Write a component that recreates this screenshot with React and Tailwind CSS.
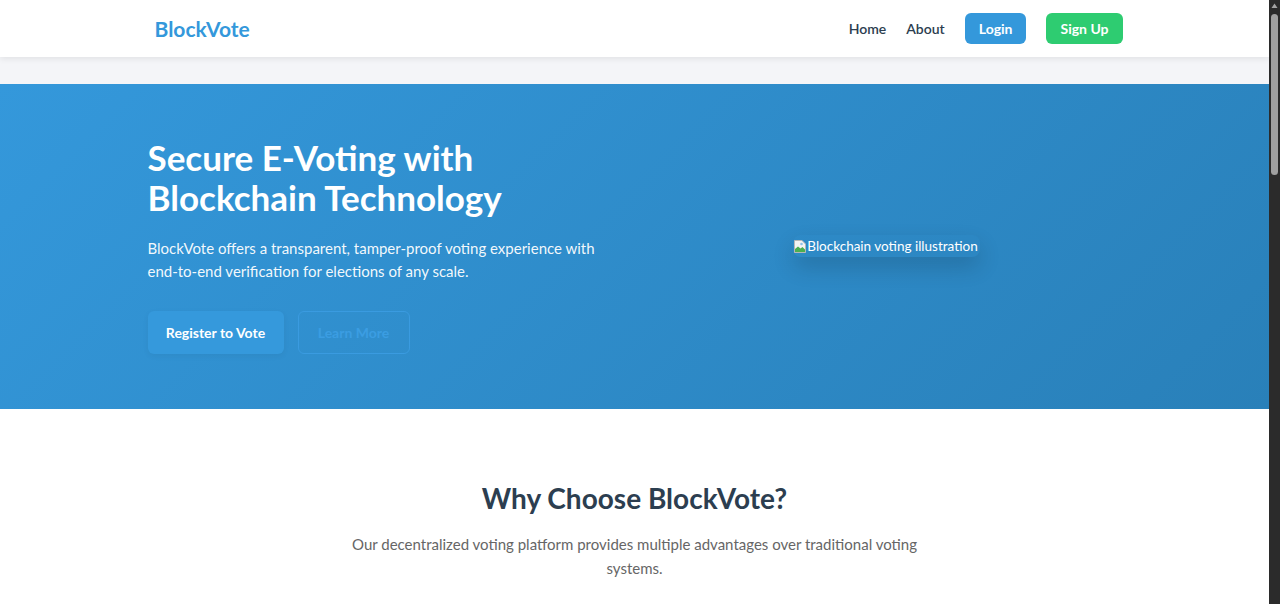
import React from "react";

const features = [
  {
    title: "Immutable Records",
    text: "Every vote is written to the blockchain and can never be altered or deleted after it is cast.",
  },
  {
    title: "Voter Privacy",
    text: "Cryptographic techniques keep each ballot anonymous while still proving that it was counted.",
  },
  {
    title: "Real-time Results",
    text: "Tallies update as soon as votes are confirmed, so results are available the moment polls close.",
  },
  {
    title: "End-to-end Verification",
    text: "Voters can check that their own ballot was recorded exactly as they intended it.",
  },
  {
    title: "Accessible Anywhere",
    text: "Vote securely from any device with an internet connection, wherever you happen to be.",
  },
  {
    title: "Lower Costs",
    text: "No printed ballots or manual counting means elections cost far less to run.",
  },
];

const steps = [
  { title: "Register", text: "Create your account and verify your identity." },
  { title: "Connect Wallet", text: "Link your wallet to receive a voting token." },
  { title: "Cast Vote", text: "Pick your candidate and sign the transaction." },
  { title: "Verify", text: "Check your vote on the public ledger." },
];

// broken image placeholder, like the browser draws for a missing src
const BrokenImage = () => (
  <svg width="14" height="16" viewBox="0 0 14 16" className="shrink-0">
    <path d="M1.5 2.5 H9 L12.5 6 V14.5 H1.5 Z" fill="#f3f3f3" stroke="#b8b8b8" />
    <path d="M2 14 L2 11 L5 8.5 L7.5 10.5 L9.5 9 L12 11.5 L12 14 Z" fill="#4caf50" />
    <circle cx="8.5" cy="6" r="1.3" fill="#8fc2e6" />
  </svg>
);

// the window's dark scrollbar, drawn next to the page
const ScrollBar = () => (
  <div className="w-[11px] shrink-0 bg-[#2b2b2b] flex flex-col items-center pt-[3px]">
    <svg width="7" height="6" viewBox="0 0 7 6">
      <path d="M3.5 0.5 L6.5 5 L0.5 5 Z" fill="#a3a3a3" />
    </svg>
    <div className="mt-[5px] w-[7px] h-[161px] rounded-full bg-[#a0a0a0]" />
  </div>
);

const App = () => {
  return (
    <div className="h-screen flex" style={{ fontFamily: 'Lato, "Noto Sans", sans-serif' }}>
      <div className="flex-1 overflow-y-auto bg-[#f4f5f8] [scrollbar-width:none]">
        {/* Navbar */}
        <header className="bg-white shadow-[0_2px_6px_rgba(0,0,0,0.08)] relative z-10">
          <nav className="max-w-[976px] mx-auto h-[57px] flex items-center justify-between">
            <a href="#" className="pl-2 text-[21px] font-bold text-[#3498db]">
              BlockVote
            </a>
            <div className="flex items-center gap-5 text-[14px] font-semibold text-[#2c3e50]">
              <a href="#">Home</a>
              <a href="#">About</a>
              <a
                href="#"
                className="h-[31px] px-[14px] flex items-center rounded-md bg-[#3498db] text-white font-bold"
              >
                Login
              </a>
              <a
                href="#"
                className="h-[31px] px-[14px] flex items-center rounded-md bg-[#2ecc71] text-white font-bold"
              >
                Sign Up
              </a>
            </div>
          </nav>
        </header>

        {/* Hero */}
        <section className="mt-[27px] bg-linear-135 from-[#3498db] to-[#2980b9] text-white">
          <div className="max-w-[976px] mx-auto pt-[53px] pb-[55px] grid grid-cols-2 gap-8 items-center">
            <div className="pl-px">
              <h1 className="text-[35px] leading-[40px] font-bold mb-[20px]">
                Secure E-Voting with Blockchain Technology
              </h1>
              <p className="text-[15px] leading-[23px] text-white/95 mb-7 pr-2">
                BlockVote offers a transparent, tamper-proof voting experience with end-to-end
                verification for elections of any scale.
              </p>
              <div className="flex gap-[14px]">
                <a
                  href="#"
                  className="h-[43px] w-[136px] flex items-center justify-center rounded-md bg-[#3599dc] text-[14px] font-bold shadow-[0_2px_6px_rgba(0,0,0,0.05)]"
                >
                  Register to Vote
                </a>
                <a
                  href="#"
                  className="h-[43px] w-[112px] flex items-center justify-center rounded-md border border-[#3a9be0] text-[14px] font-bold text-[#3b9de2]"
                >
                  Learn More
                </a>
              </div>
            </div>
            <div className="flex justify-center">
              <div className="flex items-center rounded-lg shadow-[0_10px_22px_rgba(0,0,0,0.16)] pr-[2px]">
                <BrokenImage />
                <span className="text-[13.5px] leading-[22px]">Blockchain voting illustration</span>
              </div>
            </div>
          </div>
        </section>

        {/* Features */}
        <section className="bg-white pt-[72px] pb-20">
          <div className="max-w-[976px] mx-auto text-center">
            <h2 className="text-[28px] leading-[34px] font-bold text-[#2c3e50] mb-[17px]">
              Why Choose BlockVote?
            </h2>
            <p className="max-w-[600px] mx-auto text-[15px] leading-[24px] text-[#666]">
              Our decentralized voting platform provides multiple advantages over traditional voting
              systems.
            </p>
            <div className="grid grid-cols-3 gap-8 mt-14 text-left">
              {features.map((f) => (
                <div key={f.title} className="rounded-lg bg-white p-8 shadow-[0_4px_14px_rgba(0,0,0,0.08)]">
                  <div className="w-12 h-12 rounded-full bg-[#eaf4fc] mb-5" />
                  <h3 className="text-[19px] font-bold text-[#2c3e50] mb-3">{f.title}</h3>
                  <p className="text-[15px] leading-[24px] text-[#666]">{f.text}</p>
                </div>
              ))}
            </div>
          </div>
        </section>

        {/* How it works */}
        <section className="py-20">
          <div className="max-w-[976px] mx-auto text-center">
            <h2 className="text-[28px] font-bold text-[#2c3e50] mb-4">How It Works</h2>
            <p className="max-w-[600px] mx-auto text-[15px] text-[#666] mb-14">
              Four simple steps from registration to a verified vote.
            </p>
            <div className="grid grid-cols-4 gap-6">
              {steps.map((s, i) => (
                <div key={s.title} className="flex flex-col items-center">
                  <div className="w-14 h-14 rounded-full bg-[#3498db] text-white text-xl font-bold flex items-center justify-center mb-4">
                    {i + 1}
                  </div>
                  <h3 className="text-[18px] font-bold text-[#2c3e50] mb-2">{s.title}</h3>
                  <p className="text-[14px] text-[#666]">{s.text}</p>
                </div>
              ))}
            </div>
          </div>
        </section>

        {/* CTA */}
        <section className="bg-[#2c3e50] text-white py-20">
          <div className="max-w-[976px] mx-auto text-center">
            <h2 className="text-[28px] font-bold mb-4">Ready to make your vote count?</h2>
            <p className="text-[15px] text-white/80 mb-8">Join thousands of voters using BlockVote today.</p>
            <a href="#" className="inline-block rounded-md bg-[#2ecc71] px-8 py-3 font-semibold">
              Get Started
            </a>
          </div>
        </section>

        {/* Footer */}
        <footer className="bg-[#1f2d3a] text-white/70 py-16">
          <div className="max-w-[976px] mx-auto grid grid-cols-3 gap-8 text-[14px]">
            <div>
              <div className="text-[20px] font-bold text-white mb-3">BlockVote</div>
              <p>Secure, transparent elections powered by blockchain.</p>
            </div>
            <div>
              <div className="font-semibold text-white mb-3">Links</div>
              <p>Home</p>
              <p>About</p>
              <p>Login</p>
            </div>
            <div>
              <div className="font-semibold text-white mb-3">Contact</div>
              <p>support@blockvote.io</p>
            </div>
          </div>
          <p className="text-center text-[13px] mt-12">© 2024 BlockVote. All rights reserved.</p>
        </footer>
      </div>
      <ScrollBar />
    </div>
  );
};

export default App;
